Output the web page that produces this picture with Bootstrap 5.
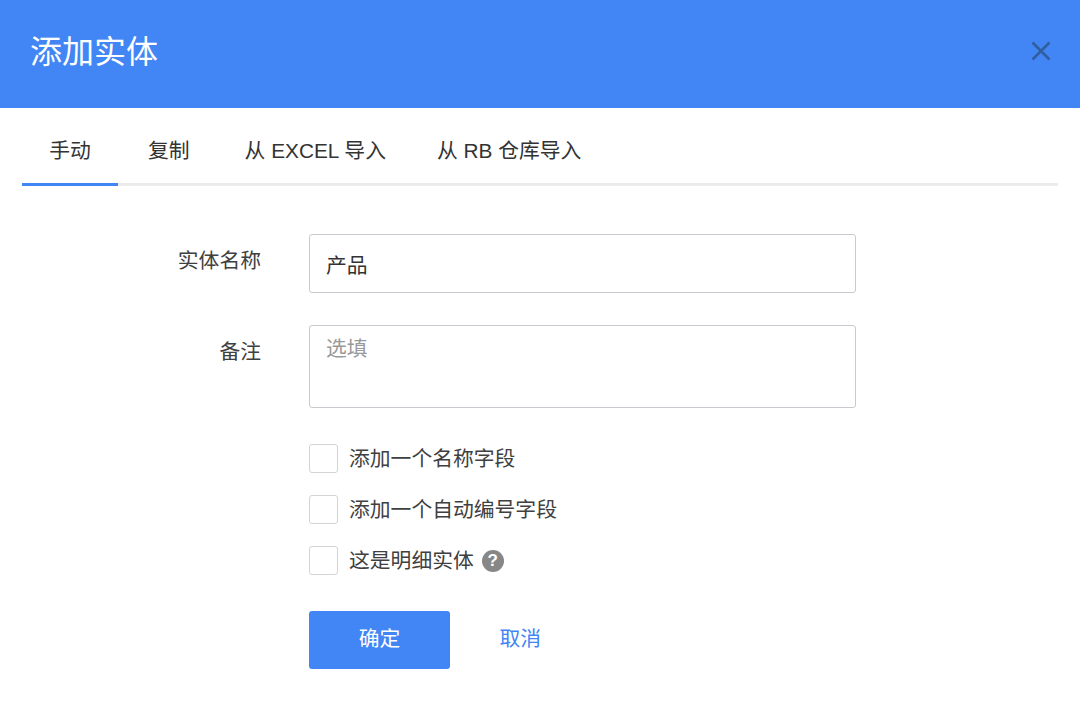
<!doctype html>
<html lang="zh"><head><meta charset="utf-8">
<link rel="stylesheet" href="https://cdn.jsdelivr.net/npm/bootstrap@5.3.0/dist/css/bootstrap.min.css">
<style>
body{font-family:"Liberation Sans","Noto Sans CJK SC",sans-serif;font-size:20.8px;color:#404040;background:#fff;height:711px;overflow:hidden}
.dlg-head{background:#4285f4;height:108px;padding:0 28px 6px 30px}
.dlg-title{font-size:32px;color:#fff;font-weight:400;margin:0 0 -2px;line-height:1}
.dlg-close{background:none;border:0;padding:0;width:22px;height:22px;line-height:0}
.dlg-tabs{margin:0 22px;height:78px;border-bottom:3px solid #ebebeb;flex-wrap:nowrap}
.dlg-tab{height:78px;color:#333;font-size:20.8px;display:flex;align-items:center;text-decoration:none;margin-bottom:-3px;border-bottom:3px solid transparent;padding-top:10px}
.dlg-tab.on{border-bottom-color:#4285f4;width:96px;justify-content:center}
.dlg-tab.t2{padding-left:30px;padding-right:28px}
.dlg-tab.t3{padding-left:27px;padding-right:25px}
.dlg-tab.t4{padding-left:26px;padding-right:26px}
.dlg-form{padding-top:48px}
.frow{display:flex}
.flabel{width:261px;text-align:right;padding-top:13px;line-height:28px;color:#404040}
.fbody{margin-left:48px;width:547px}
.finput{height:59px;border:1px solid #c9c9cf;border-radius:3px;font-size:20.8px;padding:0 16px;color:#333;box-shadow:none}
.farea{height:83px;border:1px solid #c9c9cf;border-radius:3px;font-size:20.8px;padding:8px 16px;resize:none;box-shadow:none;line-height:30px}
.farea::placeholder{color:#999;opacity:1}
.rowgap{margin-top:32px}
.chk{margin-top:4px}
.chk-item{display:flex;align-items:center;height:29px;margin-bottom:22px;gap:11px;font-size:20.8px;color:#404040}
.chk-box{width:29px;height:29px;border:1.5px solid #d4d4d4;border-radius:3px;background:#fff;flex:none;margin:0;appearance:none}
.help{width:22px;height:22px;border-radius:50%;background:#878787;color:#fff;font-size:17px;font-weight:700;display:inline-flex;align-items:center;justify-content:center;margin-left:-3px}
.btn-ok{width:141px;height:58px;background:#4285f4;border:0;border-radius:3px;color:#fff;font-size:20.8px;padding:0 0 2px}
.btn-ok:hover{background:#4285f4;color:#fff}
.btn-no{color:#4285f4;font-size:20.8px;text-decoration:none;margin-left:49.5px;padding-bottom:2px}
.btn-line{margin-top:36px}
</style></head><body>
<div class="dlg-head d-flex align-items-center justify-content-between">
<h1 class="dlg-title">添加实体</h1>
<button class="dlg-close" aria-label="关闭"><svg width="22" height="22" viewBox="0 0 22 22"><path d="M2.5 2.5 19.5 19.5M19.5 2.5 2.5 19.5" stroke="#2f5f9f" stroke-width="2.6" fill="none"/></svg></button>
</div>
<div class="dlg-tabs d-flex">
<a class="dlg-tab on" href="#">手动</a>
<a class="dlg-tab t2" href="#">复制</a>
<a class="dlg-tab t3" href="#">从 EXCEL 导入</a>
<a class="dlg-tab t4" href="#">从 RB 仓库导入</a>
</div>
<form class="dlg-form">
<div class="frow"><label class="flabel">实体名称</label><div class="fbody"><input class="form-control finput" value="产品"></div></div>
<div class="frow rowgap"><label class="flabel">备注</label><div class="fbody"><textarea class="form-control farea" placeholder="选填"></textarea></div></div>
<div class="frow rowgap"><div class="flabel p-0"></div><div class="fbody">
<div class="chk">
<label class="chk-item"><input type="checkbox" class="chk-box">添加一个名称字段</label>
<label class="chk-item"><input type="checkbox" class="chk-box">添加一个自动编号字段</label>
<label class="chk-item"><input type="checkbox" class="chk-box"><span>这是明细实体</span><span class="help">?</span></label>
</div>
<div class="d-flex align-items-center btn-line"><button type="button" class="btn btn-ok">确定</button><a class="btn-no" href="#">取消</a></div>
</div></div>
</form>
<script src="https://cdn.jsdelivr.net/npm/bootstrap@5.3.0/dist/js/bootstrap.bundle.min.js"></script>
</body></html>
